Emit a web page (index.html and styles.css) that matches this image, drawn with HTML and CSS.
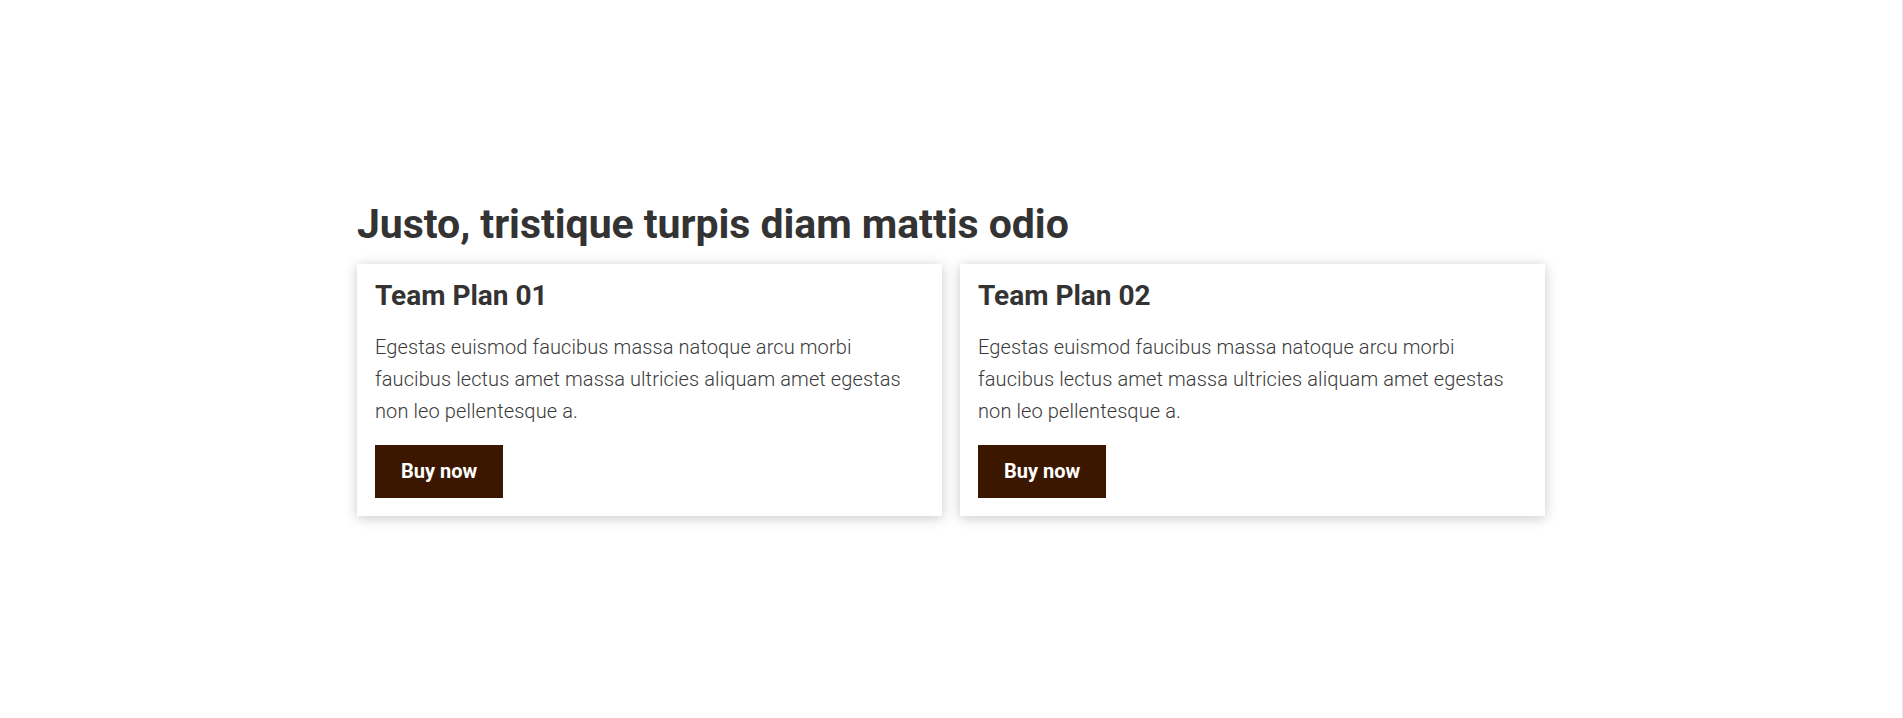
FILE: index.html
```html
<!DOCTYPE html>
<html lang="en">
<head>
<meta charset="utf-8">
<title>Team Plans</title>
<link rel="stylesheet" href="styles.css">
</head>
<body>
<main class="page">
  <section class="plans">
    <h2 class="plans-title">Justo, tristique turpis diam mattis odio</h2>
    <div class="plans-grid">
      <article class="plan-card">
        <h3 class="plan-name">Team Plan 01</h3>
        <p class="plan-text">Egestas euismod faucibus massa natoque arcu morbi faucibus lectus amet massa ultricies aliquam amet egestas non leo pellentesque a.</p>
        <a class="plan-btn" href="#">Buy now</a>
      </article>
      <article class="plan-card">
        <h3 class="plan-name">Team Plan 02</h3>
        <p class="plan-text">Egestas euismod faucibus massa natoque arcu morbi faucibus lectus amet massa ultricies aliquam amet egestas non leo pellentesque a.</p>
        <a class="plan-btn" href="#">Buy now</a>
      </article>
    </div>
  </section>
</main>
</body>
</html>
```
FILE: styles.css
```css
html {
  background: #fff;
  border-right: 1px solid #e6e6e6;
}
body {
  margin: 0;
  font-family: Roboto, "Liberation Sans", Arial, sans-serif;
  color: #333;
}
.page {
  height: 718px;
  display: flex;
  flex-direction: column;
  justify-content: flex-start;
  padding-top: 200px;
  box-sizing: border-box;
}
.plans {
  width: 1188px;
  margin: 0 auto;
}
.plans-title {
  margin: 0 0 16px;
  font-size: 41px;
  line-height: 48px;
  font-weight: 700;
  letter-spacing: -0.05px;
  color: #333;
}
.plans-grid {
  display: grid;
  grid-template-columns: 1fr 1fr;
  gap: 18px;
}
.plan-card {
  background: #fff;
  box-shadow: 0 2px 12px rgba(0, 0, 0, 0.22);
  padding: 15px 18px 18px 18px;
  display: flex;
  flex-direction: column;
  align-items: flex-start;
}
.plan-name {
  margin: 0 0 18px;
  font-size: 28px;
  line-height: 34px;
  font-weight: 700;
  color: #333;
}
.plan-text {
  margin: 0 0 18px;
  font-size: 20px;
  line-height: 32px;
  font-weight: 300;
  letter-spacing: 0.1px;
  color: #3a3a3a;
}
.plan-btn {
  display: inline-block;
  background: #3b1700;
  color: #fff;
  text-decoration: none;
  font-weight: 700;
  font-size: 20px;
  line-height: 23px;
  padding: 15px 26px;
}
```
